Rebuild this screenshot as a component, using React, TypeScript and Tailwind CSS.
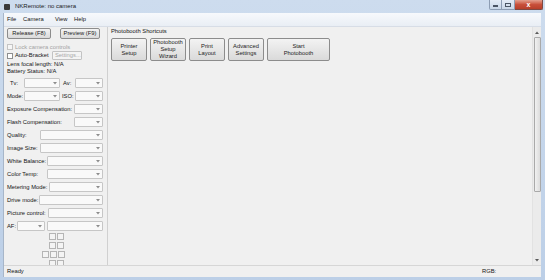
import React from "react";

function Combo({ w }: { w: string }) {
  return (
    <div className={`${w} h-[10px] shrink-0 bg-[#f9f9f9] border border-[#c6c6c6] rounded-[1px] flex items-center justify-end pr-[2px]`}>
      <svg width="4" height="3" viewBox="0 0 4 3">
        <path d="M0 0 L4 0 L2 2.6 Z" fill="#8d8d8d" />
      </svg>
    </div>
  );
}

function Row({ label, lw, cw }: { label: string; lw: string; cw: string }) {
  return (
    <div className="flex items-center h-[10px]">
      <div className={`${lw} shrink-0 whitespace-nowrap`}>{label}</div>
      <Combo w={cw} />
    </div>
  );
}

function Btn({ children, w, h }: { children: React.ReactNode; w: string; h: string }) {
  return (
    <div
      className={`${w} ${h} shrink-0 bg-linear-to-b from-[#f3f3f3] to-[#dadada] border border-[#8c8c8c] rounded-[2px] flex flex-col items-center justify-center text-center leading-[7px] text-[#222] whitespace-nowrap`}
    >
      {children}
    </div>
  );
}

function Sq() {
  return <div className="w-[7px] h-[7px] border border-[#b5b5b5] bg-[#f4f4f4]" />;
}

export default function App() {
  return (
    <div className="w-[545px] h-[280px] overflow-hidden bg-linear-to-b from-[#cddcee] to-[#bccfe7] flex flex-col font-['Liberation_Sans',Arial,sans-serif] text-[5.8px] text-[#141414]">
      {/* Title bar */}
      <div className="h-[13px] shrink-0 flex items-start">
        <div className="flex items-center h-[13px] pl-[4px]">
          <div className="w-[6px] h-[6px] bg-[#3a3a3a] rounded-[1px] mr-[5px]" />
          <span className="text-[6px] text-[#1a1a1a]">NKRemote: no camera</span>
        </div>
        <div className="ml-auto flex items-start mr-[2px]">
          <div className="w-[13px] h-[10px] border border-[#8d9db3] border-t-0 rounded-bl-[2px] bg-linear-to-b from-[#e4ecf6] to-[#c9d7e8] flex items-center justify-center">
            <div className="w-[5px] h-[1.5px] bg-[#4a5564] mt-[3px]" />
          </div>
          <div className="w-[13px] h-[10px] border border-[#8d9db3] border-t-0 border-l-0 bg-linear-to-b from-[#e4ecf6] to-[#c9d7e8] flex items-center justify-center">
            <div className="w-[6px] h-[4px] border border-[#4a5564] border-t-[1.5px]" />
          </div>
          <div className="w-[28px] h-[10px] border border-[#7d4a44] border-t-0 border-l-0 rounded-br-[2px] bg-linear-to-b from-[#e3a08f] via-[#c8503b] to-[#b73f2a] flex items-center justify-center">
            <span className="text-white text-[7px] font-bold leading-none">x</span>
          </div>
        </div>
      </div>

      {/* Client */}
      <div className="flex-1 ml-[3px] mr-[4px] mb-[3px] flex flex-col bg-[#f0f0f0] border-l border-[#a7b6c9] min-h-0">
        {/* Menu */}
        <div className="h-[14px] shrink-0 flex items-center pl-[3px] bg-linear-to-b from-[#f7f9fc] to-[#e9eef5] border-b border-[#d7dde6]">
          <span className="w-[16px]">File</span>
          <span className="w-[32px]">Camera</span>
          <span className="w-[19px]">View</span>
          <span>Help</span>
        </div>

        {/* Main */}
        <div className="flex-1 flex min-h-0">
          {/* Left panel */}
          <div className="w-[104px] shrink-0 border-r border-[#d0d0d0] overflow-hidden pl-[3px] pt-[1px] whitespace-nowrap">
            <div className="flex items-center">
              <Btn w="w-[44px]" h="h-[11px]">Release (F8)</Btn>
              <div className="w-[9px]" />
              <Btn w="w-[40px]" h="h-[11px]">Preview (F9)</Btn>
            </div>
            <div className="flex items-center h-[8px] mt-[4px] text-[#a3a3a3]">
              <div className="w-[6px] h-[6px] border border-[#c4c4c4] bg-[#f6f6f6] mr-[2px]" />
              <span>Lock camera controls</span>
            </div>
            <div className="flex items-center h-[9px]">
              <div className="w-[6px] h-[6px] border border-[#8e8e8e] bg-white mr-[2px]" />
              <span className="w-[37px]">Auto-Bracket</span>
              <div className="w-[30px] h-[9px] border border-[#c3c3c3] rounded-[1px] bg-[#f4f4f4] text-[#a8a8a8] flex items-center pl-[2px]">
                Settings...
              </div>
            </div>
            <div className="h-[7px] mt-[1px] flex items-center">Lens focal length: N/A</div>
            <div className="h-[7px] flex items-center">Battery Status: N/A</div>

            <div className="flex flex-col gap-[3px] mt-[3px]">
              <div className="flex items-center h-[10px]">
                <div className="w-[17px] pl-[3px]">Tv:</div>
                <Combo w="w-[36px]" />
                <div className="w-[15px] pl-[3px]">Av:</div>
                <Combo w="w-[28px]" />
              </div>
              <div className="flex items-center h-[10px]">
                <div className="w-[17px]">Mode:</div>
                <Combo w="w-[36px]" />
                <div className="w-[15px] pl-[2px]">ISO:</div>
                <Combo w="w-[28px]" />
              </div>
              <Row label="Exposure Compensation:" lw="w-[67px]" cw="w-[29px]" />
              <Row label="Flash Compensation:" lw="w-[67px]" cw="w-[29px]" />
              <Row label="Quality:" lw="w-[33px]" cw="w-[63px]" />
              <Row label="Image Size:" lw="w-[33px]" cw="w-[63px]" />
              <Row label="White Balance:" lw="w-[40px]" cw="w-[56px]" />
              <Row label="Color Temp:" lw="w-[40px]" cw="w-[56px]" />
              <Row label="Metering Mode:" lw="w-[42px]" cw="w-[54px]" />
              <Row label="Drive mode:" lw="w-[32px]" cw="w-[64px]" />
              <Row label="Picture control:" lw="w-[41px]" cw="w-[55px]" />
              <div className="flex items-center h-[10px]">
                <div className="w-[10px]">AF:</div>
                <Combo w="w-[28px]" />
                <div className="w-[2px]" />
                <Combo w="w-[56px]" />
              </div>
            </div>

            <div className="flex flex-col gap-[2px] mt-[2px] pl-[35px]">
              <div className="flex gap-[1px] pl-[7px]"><Sq /><Sq /></div>
              <div className="flex gap-[1px] pl-[7px]"><Sq /><Sq /></div>
              <div className="flex gap-[1px]"><Sq /><Sq /><Sq /></div>
              <div className="flex gap-[1px] pl-[7px]"><Sq /><Sq /></div>
            </div>
          </div>

          {/* Right panel */}
          <div className="flex-1 pl-[3px] pt-[1px]">
            <div className="h-[6px] flex items-center">Photobooth Shortcuts</div>
            <div className="flex gap-[3px] mt-[4px]">
              <Btn w="w-[36px]" h="h-[23px]"><span>Printer</span><span>Setup</span></Btn>
              <Btn w="w-[36px]" h="h-[23px]"><span>Photobooth</span><span>Setup</span><span>Wizard</span></Btn>
              <Btn w="w-[36px]" h="h-[23px]"><span>Print</span><span>Layout</span></Btn>
              <Btn w="w-[36px]" h="h-[23px]"><span>Advanced</span><span>Settings</span></Btn>
              <Btn w="w-[63px]" h="h-[23px]"><span>Start</span><span>Photobooth</span></Btn>
            </div>
          </div>

          {/* Scrollbar */}
          <div className="w-[9px] shrink-0 bg-[#ebebeb] border-l border-[#e2e2e2] flex flex-col">
            <div className="h-[10px] flex items-center justify-center">
              <svg width="4" height="3" viewBox="0 0 4 3"><path d="M0 3 L4 3 L2 0.4 Z" fill="#5a5a5a" /></svg>
            </div>
            <div className="h-[155px] mx-[0.5px] border border-[#a9a9a9] rounded-[1px] bg-linear-to-r from-[#f1f1f1] to-[#dcdcdc]" />
            <div className="flex-1" />
            <div className="h-[10px] flex items-center justify-center">
              <svg width="4" height="3" viewBox="0 0 4 3"><path d="M0 0 L4 0 L2 2.6 Z" fill="#5a5a5a" /></svg>
            </div>
          </div>
        </div>

        {/* Status bar */}
        <div className="h-[12px] shrink-0 flex items-center border-t border-[#d6d6d6] pl-[3px]">
          <span>Ready</span>
          <span className="ml-auto w-[59px]">RGB:</span>
        </div>
      </div>
    </div>
  );
}
